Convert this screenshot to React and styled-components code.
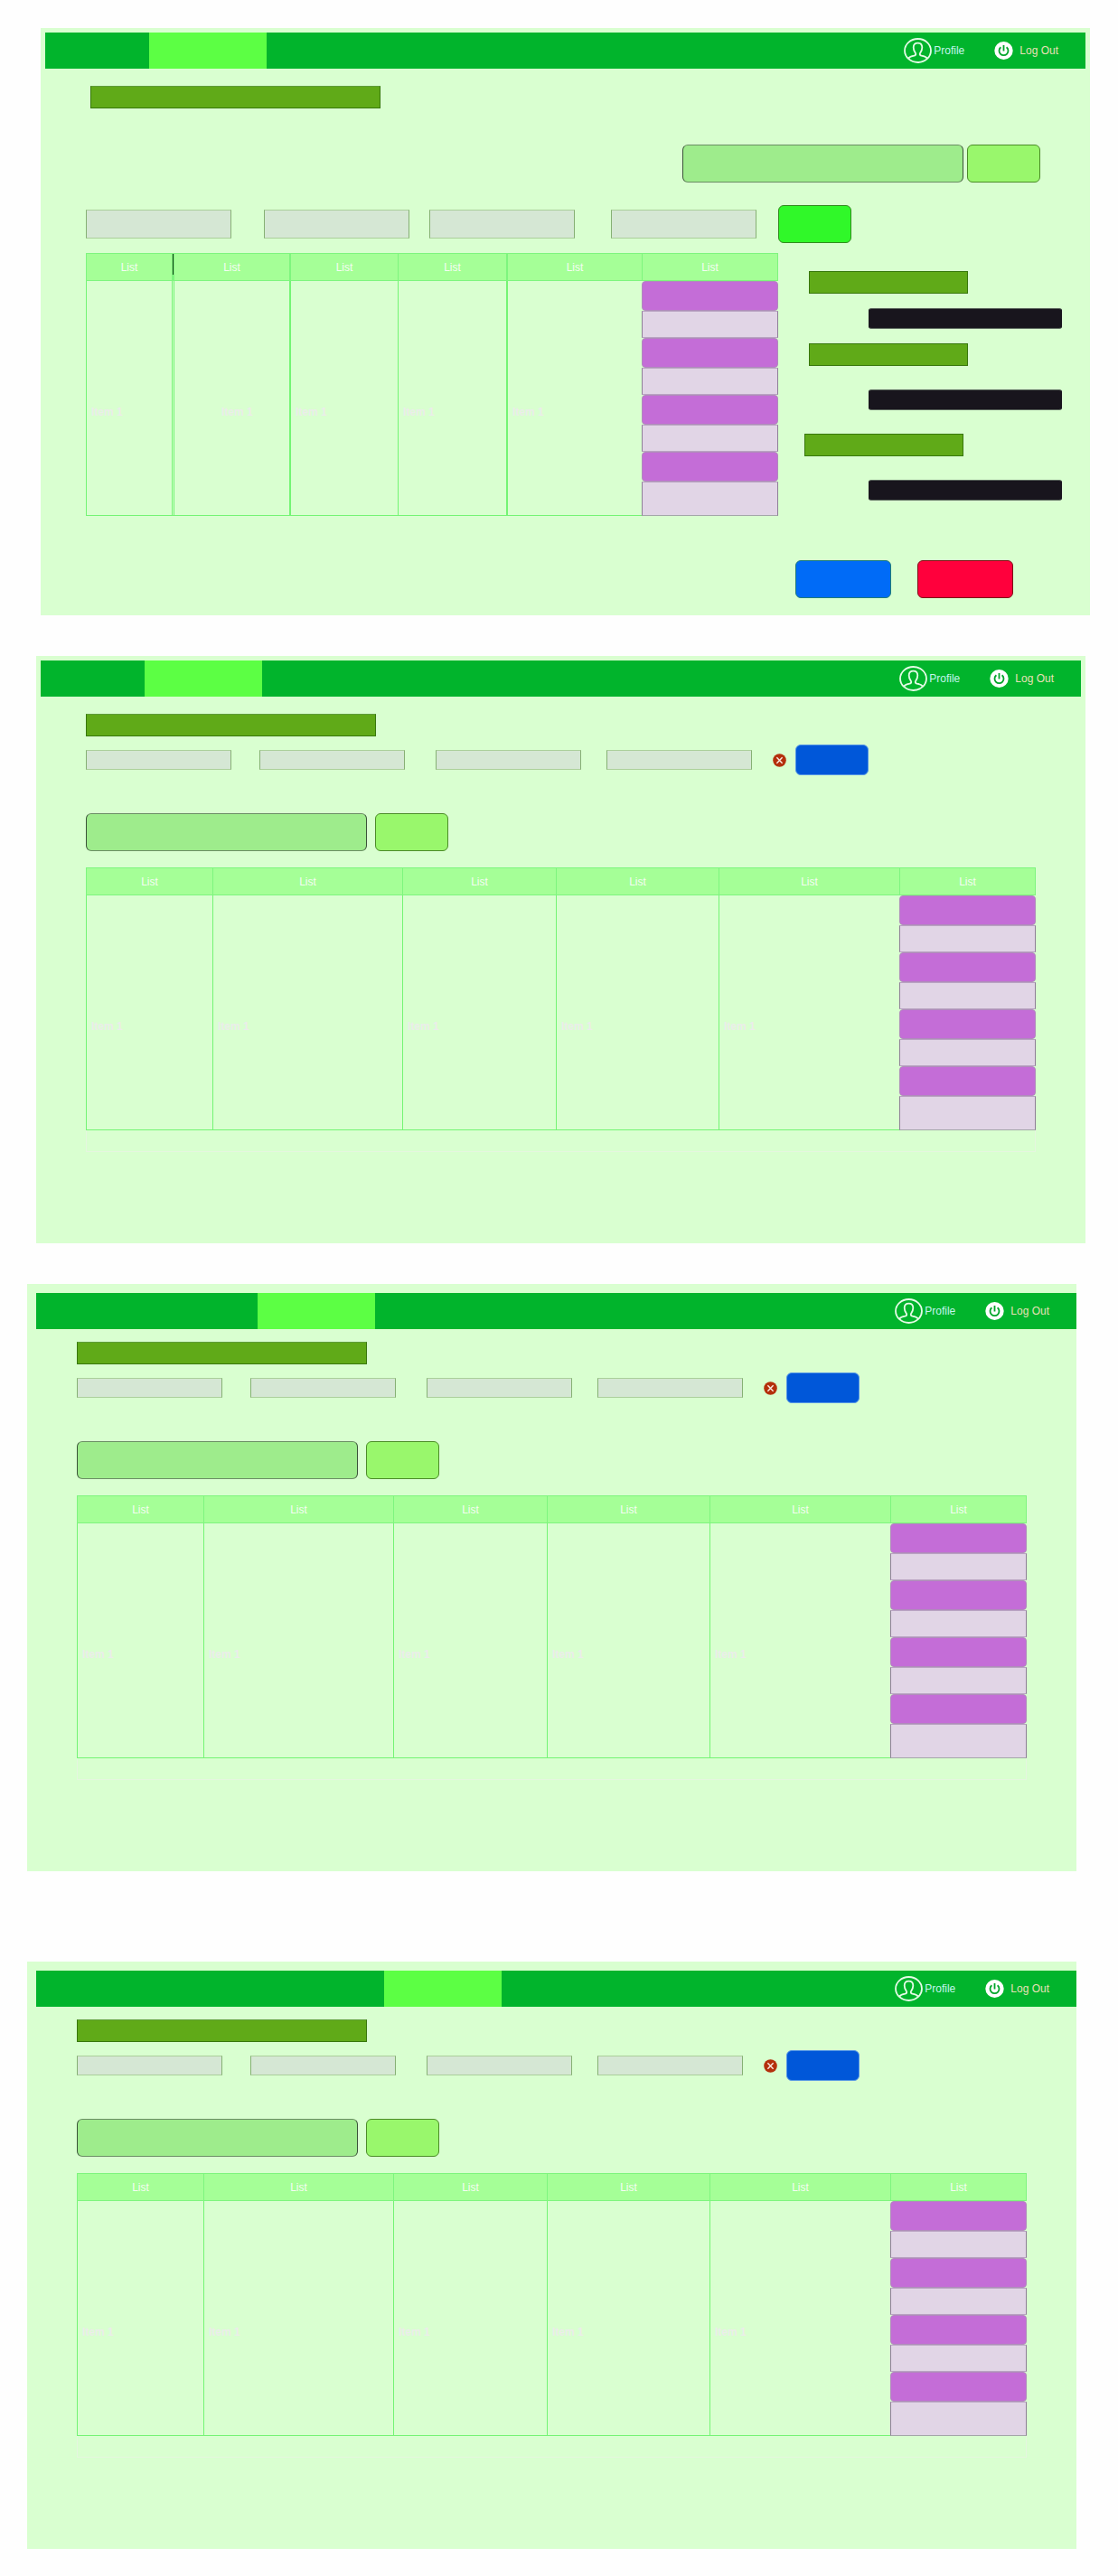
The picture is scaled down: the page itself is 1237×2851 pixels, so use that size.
import React from "react";
import styled, { createGlobalStyle } from "styled-components";

const GlobalStyle = createGlobalStyle`
  *, *::before, *::after { box-sizing: border-box; }
  body {
    margin: 0;
    background: #fefefe;
    font-family: "Liberation Sans", Arial, sans-serif;
    font-size: 12px;
    line-height: 14px;
  }
  button, input { font: inherit; margin: 0; padding: 0; }
`;

const Page = styled.main`
  padding: 31px 0 30px;
`;

const Panel = styled.section`
  min-height: 650px;
  margin: ${(p) => p.$margin};
  background: #d9ffd0;
  overflow: hidden;
`;

const NavBar = styled.nav`
  display: flex;
  align-items: center;
  height: 40px;
  margin: ${(p) => p.$margin};
  padding-right: 30px;
  background: #01b42c;
`;

const Tab = styled.a`
  align-self: stretch;
  flex: none;
  width: ${(p) => p.$width || 130}px;
  margin-right: ${(p) => p.$after || 0}px;
  background: ${(p) => (p.$active ? "#5cff44" : "transparent")};
`;

const Account = styled.div`
  display: flex;
  align-items: center;
  gap: 33px;
  margin-left: auto;
`;

const AccountLink = styled.a`
  display: flex;
  align-items: center;
  gap: ${(p) => p.$gap}px;
  color: ${(p) => p.$color};
  text-decoration: none;
`;

const Heading = styled.h2`
  width: 321px;
  height: 25px;
  margin: 0 0 0 ${(p) => p.$indent}px;
  background: #60aa18;
  border: 1px solid #37770b;
  border-top-color: #5f9c3a;
`;

const SearchRow = styled.form`
  display: flex;
  gap: ${(p) => p.$gap}px;
  justify-content: ${(p) => (p.$end ? "flex-end" : "flex-start")};
  margin-top: ${(p) => p.$top}px;
  padding: 0 55px;
`;

const SearchInput = styled.input`
  width: 311px;
  height: 42px;
  background: #9eec8c;
  border: 1px solid #3a5238;
  border-top-color: #6b8d64;
  border-bottom-color: #6b8d64;
  border-radius: 6px;
`;

const Button = styled.button`
  flex: none;
  width: ${(p) => p.$width || 81}px;
  height: ${(p) => p.$height || 42}px;
  background: ${(p) => p.$fill};
  border: 1px solid ${(p) => p.$line};
  border-radius: 6px;
`;

const FilterRow = styled.form`
  display: flex;
  align-items: center;
  margin-top: ${(p) => p.$top}px;
  padding-left: ${(p) => p.$left}px;
`;

const Filter = styled.input`
  width: 161px;
  height: ${(p) => p.$height}px;
  margin-right: ${(p) => p.$after}px;
  background: #d5e7d4;
  border: 1px solid #86b074;
  border-top-color: #abcf9b;
  border-bottom-color: #abcf9b;
  border-radius: 0;
`;

const IconButton = styled.button`
  display: flex;
  flex: none;
  margin-right: 10px;
  background: none;
  border: 0;
`;

const Board = styled.div`
  display: grid;
  grid-template-columns: minmax(0, 1fr) 345px;
  align-items: start;
  margin-top: 11px;
  padding-left: 50px;
`;

const TableArea = styled.div`
  margin: 18px 55px 0;
`;

const TableFoot = styled.div`
  height: 24px;
  border: 1px solid #e5f6df;
  border-top: 0;
`;

const Table = styled.table`
  width: 100%;
  table-layout: fixed;
  border-collapse: separate;
  border-spacing: 0;
`;

const Head = styled.th`
  position: relative;
  height: 31px;
  padding: 0;
  background: #a5ff97;
  border: 0 solid #7ef57e;
  border-width: 1px 0 1px ${(p) => p.$line || 1}px;
  color: #f5fcf3;
  font-weight: normal;
  &:last-child { border-right-width: 1px; }
`;

const Caret = styled.span`
  position: absolute;
  left: -2px;
  top: 0;
  width: 1px;
  height: 23px;
  background: #0c3a10;
`;

const Cell = styled.td`
  height: 260px;
  padding: 138px 0 0 ${(p) => p.$indent || 5}px;
  border: 0 solid #74f474;
  border-width: 0 0 1px ${(p) => p.$line || 1}px;
  border-left-style: ${(p) => (p.$line === 3 ? "double" : "solid")};
  color: #ebedea;
  font-weight: bold;
  vertical-align: top;
`;

const StatusCell = styled.td`
  padding: 0;
  vertical-align: top;
`;

const Stack = styled.div`
  display: flex;
  flex-direction: column;
  height: 260px;
`;

const Purple = styled.button`
  display: block;
  width: 100%;
  height: 33px;
  background: #c46dd7;
  border: 1px solid #b08bbb;
  border-radius: 4px;
`;

const Pale = styled.div`
  flex: none;
  height: ${(p) => (p.$last ? 38 : 30)}px;
  background: #e1d5e6;
  border: 1px solid #8f7f98;
  border-top-color: #b9a3c2;
  border-bottom-color: ${(p) => (p.$last ? "#a3a6a8" : "#b9a3c2")};
`;

const Side = styled.form`
  display: flex;
  flex-direction: column;
  padding: 20px 31px 19px 19px;
`;

const Tag = styled.label`
  width: 176px;
  height: 25px;
  margin: 0 0 ${(p) => p.$after}px ${(p) => p.$indent}px;
  background: #60aa18;
  border: 1px solid #37770b;
`;

const DarkInput = styled.input`
  align-self: flex-end;
  width: 214px;
  height: 23px;
  margin-bottom: ${(p) => p.$after}px;
  background: #18151d;
  border: 1px solid #5a665c;
  border-left-color: #18151d;
  border-right-color: #18151d;
  border-radius: 3px;
`;

const Actions = styled.div`
  display: flex;
  gap: 29px;
`;

function ProfileIcon() {
  return (
    <svg width="31" height="28" viewBox="0 0 31 28" fill="none" stroke="#e4fbe6" strokeWidth="1.8" aria-hidden="true">
      <ellipse cx="15.5" cy="14" rx="14.5" ry="13" />
      <path d="M5 22.6C6.5 20.6 9 20 11.5 19.6C13.4 19.2 13.6 17.8 12.8 16.6C11.3 14.8 10.7 12.8 10.7 10.6C10.7 7.4 12.7 5.6 15.5 5.6S20.3 7.4 20.3 10.6C20.3 12.8 19.7 14.8 18.2 16.6C17.4 17.8 17.6 19.2 19.5 19.6C22 20 24.5 20.6 26 22.6" />
    </svg>
  );
}

function PowerIcon() {
  return (
    <svg width="21" height="20" viewBox="0 0 21 20" fill="none" aria-hidden="true">
      <ellipse cx="10.5" cy="10" rx="10.2" ry="9.9" fill="#fff" />
      <path d="M7.4 6.2A5 5 0 1 0 13.6 6.2M10.5 4V10.4" stroke="#01a52a" strokeWidth="1.8" />
    </svg>
  );
}

function RemoveIcon() {
  return (
    <svg width="15" height="15" viewBox="0 0 15 15" aria-hidden="true">
      <circle cx="7.5" cy="7.5" r="7.3" fill="#b4300c" />
      <path d="M4.4 4.2L10.6 10.8M10.6 4.2L4.4 10.8" stroke="#fbe9e2" strokeWidth="1.4" />
    </svg>
  );
}

function Nav({ margin, active }) {
  return (
    <NavBar $margin={margin} aria-label="Main">
      <Tab href="#" $width={115} aria-label="Home" />
      <Tab href="#" $active={active === 1} aria-label="First section" />
      <Tab href="#" $active={active === 2} $after={10} aria-label="Second section" />
      <Tab href="#" $active={active === 3} aria-label="Third section" />
      <Account>
        <AccountLink href="#" $gap={2} $color="#c3f6ee">
          <ProfileIcon />
          Profile
        </AccountLink>
        <AccountLink href="#" $gap={7} $color="#e9e0b8">
          <PowerIcon />
          Log Out
        </AccountLink>
      </Account>
    </NavBar>
  );
}

function Search({ top, gap, end }) {
  return (
    <SearchRow $top={top} $gap={gap} $end={end}>
      <SearchInput type="search" aria-label="Search" />
      <Button type="button" $fill="#99f76c" $line="#4c8c28" aria-label="Search" />
    </SearchRow>
  );
}

function ListTable({ columns }) {
  return (
    <Table>
      <colgroup>
        {columns.map((c, i) => (
          <col key={i} style={{ width: c.width }} />
        ))}
        <col style={{ width: 151 }} />
      </colgroup>
      <thead>
        <tr>
          {columns.map((c, i) => (
            <Head key={i} $line={c.line}>
              {c.caret && <Caret />}
              List
            </Head>
          ))}
          <Head>List</Head>
        </tr>
      </thead>
      <tbody>
        <tr>
          {columns.map((c, i) => (
            <Cell key={i} $line={c.line} $indent={c.indent}>
              Item 1
            </Cell>
          ))}
          <StatusCell>
            <Stack>
              {[0, 1, 2, 3].map((n) => (
                <React.Fragment key={n}>
                  <Purple type="button" aria-label={`Row action ${n + 1}`} />
                  <Pale $last={n === 3} />
                </React.Fragment>
              ))}
            </Stack>
          </StatusCell>
        </tr>
      </tbody>
    </Table>
  );
}

const editorColumns = [
  { width: 95 },
  { width: 130, line: 3, indent: 52, caret: true },
  { width: 120, line: 2 },
  { width: 120 },
  { width: 150, line: 2 },
];

const listColumns = [140, 210, 170, 180, 200].map((width) => ({ width }));

const sideFields = [
  { id: "first", indent: 15, tagAfter: 16, after: 16 },
  { id: "second", indent: 15, tagAfter: 26, after: 26 },
  { id: "third", indent: 10, tagAfter: 26, after: 66 },
];

function EditorPanel() {
  return (
    <Panel $margin="0 31px 0 45px">
      <Nav margin="5px 5px 19px" active={1} />
      <Heading $indent={55} aria-label="Editor" />
      <Search top={40} gap={4} end />
      <FilterRow $top={25} $left={50}>
        {[36, 22, 40, 24].map((after, i) => (
          <Filter key={i} $height={32} $after={after} aria-label={`Field ${i + 1}`} />
        ))}
        <Button type="button" $fill="#30f829" $line="#2f8a1c" aria-label="Add" />
      </FilterRow>
      <Board>
        <ListTable columns={editorColumns} />
        <Side>
          {sideFields.map((f) => (
            <React.Fragment key={f.id}>
              <Tag htmlFor={f.id} $indent={f.indent} $after={f.tagAfter} />
              <DarkInput id={f.id} $after={f.after} aria-label={`Detail ${f.id}`} />
            </React.Fragment>
          ))}
          <Actions>
            <Button type="button" $width={106} $fill="#006bf7" $line="#1f7a78" aria-label="Save" />
            <Button type="button" $width={106} $fill="#ff003c" $line="#7a1414" aria-label="Cancel" />
          </Actions>
        </Side>
      </Board>
    </Panel>
  );
}

function ListPanel({ margin, navMargin, active }) {
  return (
    <Panel $margin={margin}>
      <Nav margin={navMargin} active={active} />
      <Heading $indent={55} aria-label="List" />
      <FilterRow $top={9} $left={55}>
        {[31, 34, 28, 23].map((after, i) => (
          <Filter key={i} $height={22} $after={after} aria-label={`Filter ${i + 1}`} />
        ))}
        <IconButton type="button" aria-label="Clear filters">
          <RemoveIcon />
        </IconButton>
        <Button type="button" $height={34} $fill="#0057d9" $line="#5596e4" aria-label="Apply" />
      </FilterRow>
      <Search top={42} gap={9} />
      <TableArea>
        <ListTable columns={listColumns} />
        <TableFoot />
      </TableArea>
    </Panel>
  );
}

export default function App() {
  return (
    <>
      <GlobalStyle />
      <Page>
        <EditorPanel />
        <ListPanel margin="45px 36px 0 40px" navMargin="5px 5px 19px" active={1} />
        <ListPanel margin="45px 46px 0 30px" navMargin="10px 0 14px 10px" active={2} />
        <ListPanel margin="100px 46px 0 30px" navMargin="10px 0 14px 10px" active={3} />
      </Page>
    </>
  );
}
